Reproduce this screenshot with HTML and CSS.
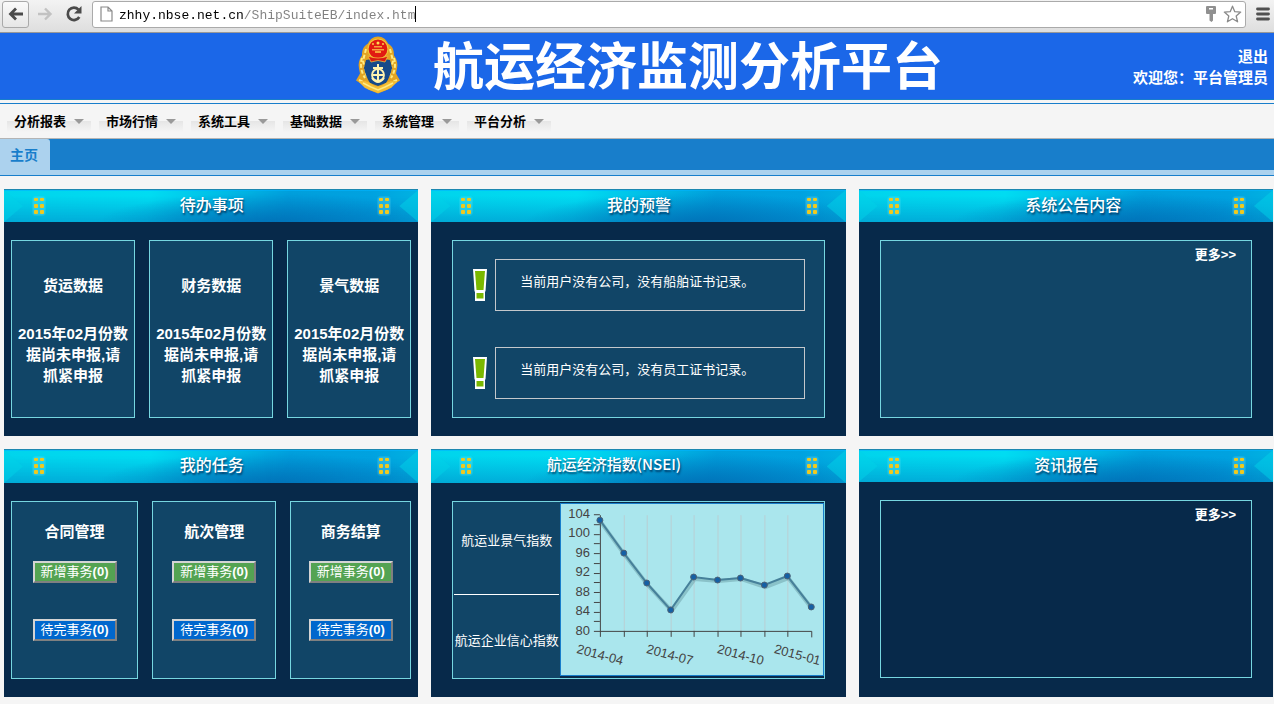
FILE: index.html
```html
<!DOCTYPE html>
<html lang="zh-CN">
<head>
<meta charset="utf-8">
<title>航运经济监测分析平台</title>
<link rel="stylesheet" href="styles.css">
</head>
<body>
<svg class="defs" aria-hidden="true">
  <symbol id="dots" viewBox="0 0 16 22">
    <rect x="1" y="1" width="14" height="20" rx="4" fill="#7fe6f0" opacity=".16"/>
    <rect x="2" y="2" width="12" height="18" rx="3" fill="#7fe6f0" opacity=".16"/>
    <g fill="#efc91e">
      <rect x="3" y="3" width="4" height="3" rx="1"/><rect x="9" y="3" width="4" height="3" rx="1"/>
      <rect x="3" y="9" width="4" height="4" rx="1"/><rect x="9" y="9" width="4" height="4" rx="1"/>
      <rect x="3" y="15" width="4" height="4" rx="1"/><rect x="9" y="15" width="4" height="4" rx="1"/>
    </g>
  </symbol>
  <symbol id="alert" viewBox="0 0 16 34">
    <path d="M1 1h14l-1.500 22.500H13V33H3v-9.500h-.500z" fill="#fff"/>
    <path d="M3 3h10l-1.500 19h-7z" fill="#7ab800"/>
    <path d="M4.500 25h7v5.500h-7z" fill="#7ab800"/>
  </symbol>
</svg>

<div class="toolbar">
  <button class="tool tool-back" aria-label="后退"><svg width="18" height="18" viewBox="0 0 18 18"><path d="M16 9H4M9 3.500L3.500 9 9 14.500" fill="none" stroke="#4a4a4a" stroke-width="2.800"/></svg></button>
  <button class="tool" aria-label="前进"><svg width="18" height="18" viewBox="0 0 18 18"><path d="M2 9h12M9 3.500L14.500 9 9 14.500" fill="none" stroke="#c2c2c2" stroke-width="2.400"/></svg></button>
  <button class="tool" aria-label="刷新"><svg width="18" height="18" viewBox="0 0 18 18"><path d="M14.300 12A6.200 6.200 0 1 1 13.500 4.600" fill="none" stroke="#4a4a4a" stroke-width="2.700"/><path d="M16.500 1v7.500H9z" fill="#4a4a4a"/></svg></button>
  <div class="address">
    <svg width="13" height="16" viewBox="0 0 13 16"><path d="M1 1h7l4 4v10H1zM8 1v4h4" fill="#fff" stroke="#8a8a8a" stroke-width="1.200"/></svg>
    <input class="url" type="text" aria-label="地址" value="zhhy.nbse.net.cn/ShipSuiteEB/index.htm">
    <svg width="12" height="16" viewBox="0 0 12 16"><path d="M2 0h8q1 0 1 1v6q0 1-1 1H8v6.500L6.500 16 4.500 14.500V8H2Q1 8 1 7V1q0-1 1-1z" fill="#909090"/><path d="M4 2h4v1.500H4z" fill="#fff"/></svg>
    <svg width="19" height="18" viewBox="0 0 19 18"><path d="M9.500 1.200l2.300 5.500 5.900.4-4.500 3.900 1.400 5.800-5.100-3.100-5.100 3.100 1.400-5.800L1.300 7.100l5.900-.4z" fill="#fff" stroke="#8a8a8a" stroke-width="1.300" stroke-linejoin="round"/></svg>
  </div>
  <button class="tool tool-menu" aria-label="菜单"><svg width="14" height="14" viewBox="0 0 14 14"><path d="M1.500 2h11M1.500 7h11M1.500 12h11" stroke="#505050" stroke-width="2.800" stroke-linecap="round"/></svg></button>
</div>

<header class="banner">
  <div class="brand">
    <svg width="46" height="58" viewBox="0 0 46 58">
      <path d="M23 .5c5 0 8 3 10 7 5 3 6 7 6 12 3 4 4 8 3 13l-1 5 4 7-8 5-4 4-10 4-10-4-4-4-8-5 4-7-1-5c-1-5 0-9 3-13 0-5 1-9 6-12 2-4 5-7 10-7z" fill="#e3a423"/>
      <path d="M7 22c-2 6-1 14 3 20M39 22c2 6 1 14-3 20M11 13l-3 12 4 16M35 13l3 12-4 16M4 44l9 4 4 4M42 44l-9 4-4 4M17 53l6 2 6-2" fill="none" stroke="#ffeb82" stroke-width="2" stroke-dasharray="4 2"/>
      <path d="M11 26l-2 7 5 8M35 26l2 7-5 8" fill="none" stroke="#a86a10" stroke-width="1.200" stroke-dasharray="2 3"/>
      <path d="M11 24q12-3 24 0l2 8q-2 9-6 15l-8 3-8-3q-4-6-6-15z" fill="#164a8a"/>
      <circle cx="23" cy="13" r="10" fill="#e11a12" stroke="#f2c33a" stroke-width="1.200"/>
      <path d="M17 13h12v1.500H17zM19 10h8v1.500h-8zM20 15h6v2h-6z" fill="#f8a23a"/>
      <circle cx="23" cy="7" r="1.500" fill="#ffdf50"/><circle cx="18" cy="8" r=".9" fill="#ffdf50"/><circle cx="28" cy="8" r=".9" fill="#ffdf50"/>
      <path d="M13 20l3 6q7-3 14 0l3-6q-10 4-20 0z" fill="#d81b12" stroke="#f5b936" stroke-width=".8"/>
      <circle cx="23" cy="39" r="6" fill="none" stroke="#fff3b0" stroke-width="1.800"/>
      <path d="M23 28v19M18 32h10M18 39h10M17 42q6 8 12 0" fill="none" stroke="#fff3b0" stroke-width="2"/>
      <path d="M6 45q8 0 12 4 5 3 10 0 4-4 12-4l2 1-6 6-5 2-8 3-8-3-5-2-6-6z" fill="#f4bd35"/>
      <path d="M8 47l8 4 7 3 7-3 8-4" fill="none" stroke="#ffeb82" stroke-width="1.500"/>
    </svg>
    <h1 class="brand-name">航运经济监测分析平台</h1>
  </div>
  <div class="user">
    <a class="user-link" href="#">退出</a>
    <span>欢迎您：平台管理员</span>
  </div>
</header>

<nav class="menu">
  <button class="menu-item">分析报表</button>
  <button class="menu-item">市场行情</button>
  <button class="menu-item">系统工具</button>
  <button class="menu-item">基础数据</button>
  <button class="menu-item">系统管理</button>
  <button class="menu-item">平台分析</button>
</nav>

<div class="tabs"><a class="tab" href="#">主页</a></div>

<main class="board">
  <section class="panel">
    <header class="panel-head"><svg class="dots"><use href="#dots"/></svg><h2 class="panel-title">待办事项</h2><svg class="dots"><use href="#dots"/></svg></header>
    <div class="cards">
      <article class="card todo"><h3 class="card-title">货运数据</h3><p class="card-text">2015年02月份数<br>据尚未申报,请<br>抓紧申报</p></article>
      <article class="card todo"><h3 class="card-title">财务数据</h3><p class="card-text">2015年02月份数<br>据尚未申报,请<br>抓紧申报</p></article>
      <article class="card todo"><h3 class="card-title">景气数据</h3><p class="card-text">2015年02月份数<br>据尚未申报,请<br>抓紧申报</p></article>
    </div>
  </section>

  <section class="panel">
    <header class="panel-head"><svg class="dots"><use href="#dots"/></svg><h2 class="panel-title">我的预警</h2><svg class="dots"><use href="#dots"/></svg></header>
    <div class="single">
      <div class="card warnings">
        <div class="warning"><svg class="warning-icon"><use href="#alert"/></svg><p class="warning-text">当前用户没有公司，没有船舶证书记录。</p></div>
        <div class="warning"><svg class="warning-icon"><use href="#alert"/></svg><p class="warning-text">当前用户没有公司，没有员工证书记录。</p></div>
      </div>
    </div>
  </section>

  <section class="panel">
    <header class="panel-head"><svg class="dots"><use href="#dots"/></svg><h2 class="panel-title panel-title-notice">系统公告内容</h2><svg class="dots"><use href="#dots"/></svg></header>
    <div class="single">
      <div class="card feed"><a class="more" href="#">更多&gt;&gt;</a></div>
    </div>
  </section>

  <section class="panel">
    <header class="panel-head panel-head-tall"><svg class="dots"><use href="#dots"/></svg><h2 class="panel-title">我的任务</h2><svg class="dots"><use href="#dots"/></svg></header>
    <div class="cards cards-task">
      <article class="card task"><h3 class="card-title">合同管理</h3><button class="count count-new">新增事务<b>(0)</b></button><button class="count count-open">待完事务<b>(0)</b></button></article>
      <article class="card task"><h3 class="card-title">航次管理</h3><button class="count count-new">新增事务<b>(0)</b></button><button class="count count-open">待完事务<b>(0)</b></button></article>
      <article class="card task"><h3 class="card-title">商务结算</h3><button class="count count-new">新增事务<b>(0)</b></button><button class="count count-open">待完事务<b>(0)</b></button></article>
    </div>
  </section>

  <section class="panel">
    <header class="panel-head panel-head-tall"><svg class="dots"><use href="#dots"/></svg><h2 class="panel-title panel-title-index">航运经济指数(NSEI)</h2><svg class="dots"><use href="#dots"/></svg></header>
    <div class="single">
      <div class="card index">
        <div class="index-names">
          <a class="index-name" href="#">航运业景气指数</a>
          <a class="index-name" href="#">航运企业信心指数</a>
        </div>
        <div class="chart">
          <svg class="plot" viewBox="0 0 262 171" role="img" aria-label="航运业景气指数">
            <path d="M63.500 11v116M86.500 11v116M110.500 11v116M133.500 11v116M157.500 11v116M180.500 11v116M204.500 11v116M227.500 11v116" stroke="#b9cfd4"/>
            <path d="M39.500 11v122M33 127.500h218.500v6M33 10.500h6M33 20.500h6M33 30.500h6M33 39.500h6M33 49.500h6M33 59.500h6M33 69.500h6M33 78.500h6M33 88.500h6M33 98.500h6M33 108.500h6M33 117.500h6M63.500 127v6M86.500 127v6M110.500 127v6M133.500 127v6M157.500 127v6M180.500 127v6M204.500 127v6M227.500 127v6" fill="none" stroke="#444"/>
            <path d="M40 18L64 51 87 81 111 107 134 75 158 77 181 75 205 83 228 74 252 105" fill="none" stroke="#4f7f88" stroke-width="4" opacity=".35"/>
            <path d="M39 16L63 49 86 79 110 106 133 73 157 76 180 74 204 81 227 72 251 103" fill="none" stroke="#46809a" stroke-width="2"/>
            <g fill="#1560a5" stroke="#4b6275">
              <circle cx="39" cy="16" r="3"/><circle cx="63" cy="49" r="3"/><circle cx="86" cy="79" r="3"/><circle cx="110" cy="106" r="3"/><circle cx="133" cy="73" r="3"/><circle cx="157" cy="76" r="3"/><circle cx="180" cy="74" r="3"/><circle cx="204" cy="81" r="3"/><circle cx="227" cy="72" r="3"/><circle cx="251" cy="103" r="3"/>
            </g>
            <g class="plot-text" text-anchor="end">
              <text x="29" y="14">104</text><text x="29" y="33">100</text><text x="29" y="53">96</text><text x="29" y="72">92</text><text x="29" y="92">88</text><text x="29" y="111">84</text><text x="29" y="131">80</text>
            </g>
            <g class="plot-text">
              <text transform="translate(15 149) rotate(15)">2014-04</text>
              <text transform="translate(85 149) rotate(15)">2014-07</text>
              <text transform="translate(156 149) rotate(15)">2014-10</text>
              <text transform="translate(213 149) rotate(15)">2015-01</text>
            </g>
          </svg>
        </div>
      </div>
    </div>
  </section>

  <section class="panel">
    <header class="panel-head"><svg class="dots"><use href="#dots"/></svg><h2 class="panel-title">资讯报告</h2><svg class="dots"><use href="#dots"/></svg></header>
    <div class="single">
      <div class="card feed feed-plain"><a class="more" href="#">更多&gt;&gt;</a></div>
    </div>
  </section>
</main>
</body>
</html>
```
FILE: styles.css
```css
* { box-sizing: border-box; }

body {
  margin: 0;
  background: #f5f5f5;
  font: 13px/21px "Liberation Sans", "Noto Sans CJK SC", sans-serif;
  color: #fff;
}

h1, h2, h3, p { margin: 0; }
a { color: inherit; text-decoration: none; }
svg { display: block; flex: none; }
.defs { position: absolute; width: 0; height: 0; }
button { font: inherit; }

/* Browser bar */
.toolbar {
  display: flex;
  align-items: center;
  height: 33px;
  padding: 0 3px 4px 2px;
  background: linear-gradient(#f3f3f3, #dedede);
  border-bottom: 1px solid #989898;
}
.tool {
  display: flex;
  align-items: center;
  justify-content: center;
  width: 27px;
  height: 27px;
  margin-right: 2px;
  padding: 0;
  border: 0;
  background: none;
}
.tool-back {
  border: 1px solid #a9a9a9;
  border-radius: 3px;
  background: linear-gradient(#fafafa, #e6e6e6);
}
.tool-menu { width: 16px; margin: 0 0 0 9px; }
.address {
  display: flex;
  flex: 1;
  align-items: center;
  gap: 6px;
  height: 27px;
  margin-left: 3px;
  padding: 0 3px 0 7px;
  background: #fff;
  border: 1px solid #aaa;
  border-radius: 3px;
}
.url {
  flex: 1;
  min-width: 0;
  height: 22px;
  padding: 2px 0 0;
  border: 0;
  outline: 0;
  font: 13px/20px "Liberation Mono", monospace;
  color: transparent;
  background:
    linear-gradient(#000, #000) 38ch 3px / 1px 16px no-repeat,
    linear-gradient(90deg, #000 16ch, #808080 16ch);
  background-clip: padding-box, text;
}

/* Banner */
.banner {
  display: grid;
  grid-template-columns: 1fr auto 1fr;
  align-items: center;
  height: 67px;
  padding: 0 6px 2px 30px;
  background: #1b67e8;
  border-bottom: 1px solid #187ecb;
}
.brand {
  display: flex;
  grid-column: 2;
  align-items: center;
  gap: 32px;
}
.brand-name {
  padding-bottom: 4px;
  font: bold 51px/60px "Noto Sans CJK SC", sans-serif;
  white-space: nowrap;
}
.user {
  display: flex;
  flex-direction: column;
  align-items: flex-end;
  padding-top: 4px;
  font-size: 15px;
  font-weight: bold;
}

/* Menu and tabs */
.menu {
  display: flex;
  gap: 8px;
  height: 36px;
  margin-top: 3px;
  padding: 7px 7px 0;
  border-top: 1px solid #187ecb;
  border-bottom: 1px solid #b4b4b4;
}
.menu-item {
  display: flex;
  align-items: center;
  gap: 8px;
  height: 21px;
  padding: 0 7px;
  border: 0;
  background: linear-gradient(#f5f5f5 50%, #e6e6e6 50%, #f5f5f5);
  font-weight: bold;
  color: #000;
}
.menu-item::after {
  content: "";
  border: 5px solid transparent;
  border-top-color: #999;
  border-bottom: 0;
}
.tabs {
  display: flex;
  height: 37px;
  background: #187ecb;
  border-bottom: 1px solid #187ecb;
  box-shadow: inset 0 -5px #acd2ee;
}
.tab {
  padding: 6px 12px 0 10px;
  background: #acd2ee;
  border-radius: 0 3px 0 0;
  font-size: 14px;
  font-weight: bold;
  color: #187ecb;
}

/* Panels */
.board {
  display: grid;
  grid-template-columns: repeat(3, 1fr);
  gap: 13px;
  padding: 13px 1px 7px 4px;
}
.panel { background: #07294a; }
.panel-head {
  display: flex;
  align-items: center;
  justify-content: space-between;
  position: relative;
  height: 33px;
  padding: 0 26px 0 27px;
  background:
    radial-gradient(ellipse 42% 100% at 64% 110%, rgba(0, 106, 178, .8), transparent),
    linear-gradient(rgba(0, 100, 180, 0) 20%, rgba(0, 120, 190, .45)),
    linear-gradient(100deg, #00d4ec, #00dcf2 35%, #009fdc 68%, #00a2e0 88%, #00b4e2);
  box-shadow: inset 0 1px #1c88b0, inset 0 2px rgba(0, 180, 255, .6);
}
.panel-head-tall { height: 34px; }
.panel-head::before,
.panel-head::after {
  content: "";
  position: absolute;
  top: 1px;
  bottom: 0;
  width: 19px;
  background: rgba(0, 210, 232, .5);
}
.panel-head::before { left: 0; clip-path: polygon(0 0, 100% 50%, 0 100%); }
.panel-head::after { right: 0; clip-path: polygon(100% 0, 0 50%, 100% 100%); }
.dots { width: 16px; height: 22px; }
.panel-title {
  padding-bottom: 4px;
  font: 500 16px/28px "Noto Sans CJK SC", sans-serif;
  text-shadow: 1px 2px 2px rgba(0, 40, 80, .8);
}
.panel-title-notice { margin-left: 14px; }
.panel-title-index { margin-right: 50px; font-size: 15px; }

.cards {
  display: grid;
  grid-template-columns: repeat(3, 1fr);
  gap: 14px;
  padding: 18px 7px;
}
.cards-task { grid-template-columns: 127fr 124fr 121fr; }
.single { padding: 18px 21px; }
.card {
  min-height: 178px;
  background: #114567;
  border: 1px solid #76d6e0;
}
.card-title { font-size: 15px; line-height: 21px; }

.todo { padding-top: 34px; text-align: center; }
.card-text {
  margin-top: 27px;
  font-size: 15px;
  font-weight: bold;
  white-space: nowrap;
}

.warnings {
  display: flex;
  flex-direction: column;
  gap: 36px;
  padding: 18px 19px;
}
.warning { display: flex; align-items: center; gap: 7px; }
.warning-icon { width: 16px; height: 34px; }
.warning-text {
  flex: 1;
  height: 52px;
  padding: 11px 24px;
  border: 1px solid #c4c8cc;
}

.feed { padding: 3px 15px; text-align: right; }
.feed-plain { background: #07294a; }
.more { font-weight: bold; }

.task {
  display: flex;
  flex-direction: column;
  align-items: center;
  padding-top: 19px;
}
.count {
  width: 84px;
  height: 22px;
  padding: 0;
  border: 2px outset #d4d4d4;
  line-height: 18px;
  color: #fff;
  white-space: nowrap;
}
.count-new { margin-top: 19px; background: #54a352; }
.count-open { margin-top: 36px; background: #0067cd; }

.index { display: flex; }
.index-names { flex: 107; min-width: 0; padding: 0 1px; text-align: center; }
.index-name {
  display: block;
  height: 93px;
  padding-top: 28px;
  border-bottom: 1px solid #fff;
  white-space: nowrap;
}
.index-name + .index-name { height: 83px; padding-top: 35px; border: 0; }
.chart {
  flex: 268;
  min-width: 0;
  padding: 1px 0 2px;
  background: #07294a;
}
.plot {
  width: 100%;
  height: 173px;
  background: #aae6ed;
  border: 1px solid #187ecb;
}
.plot-text { font: 13px "Liberation Sans", sans-serif; fill: #444; }
```
